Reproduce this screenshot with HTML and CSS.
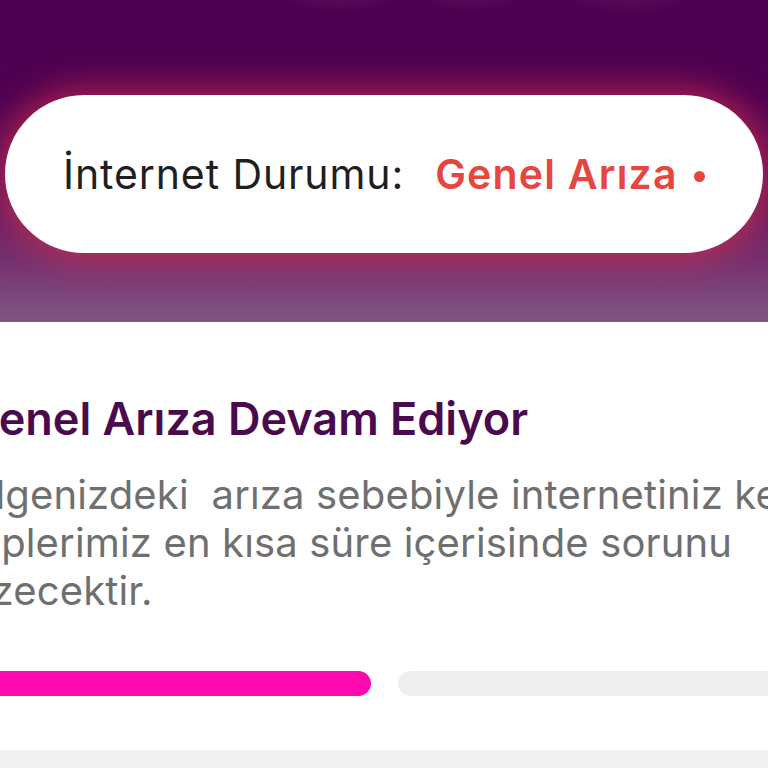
FILE: index.html
```html
<!DOCTYPE html>
<html lang="tr">
<head>
<meta charset="utf-8">
<title>İnternet Durumu</title>
<link rel="stylesheet" href="styles.css">
</head>
<body>
<header class="hero">
  <div class="hero-deco"></div>
  <div class="status-pill">
    <span class="status-label">İnternet Durumu:</span>
    <span class="status-value">Genel Arıza</span>
    <span class="status-dot"></span>
  </div>
</header>
<main class="content">
  <h1 class="title">Genel Arıza Devam Ediyor</h1>
  <p class="desc">
    <span class="line">Bölgenizdeki&nbsp; arıza sebebiyle internetiniz kesilmiştir.</span>
    <span class="line">Ekiplerimiz en kısa süre içerisinde sorunu</span>
    <span class="line">çözecektir.</span>
  </p>
  <div class="progress">
    <div class="seg seg-on"></div>
    <div class="seg"></div>
  </div>
</main>
<footer class="footer"></footer>
</body>
</html>
```
FILE: styles.css
```css
html, body {
  margin: 0;
  padding: 0;
}
body {
  width: 768px;
  height: 768px;
  overflow: hidden;
  background: #ffffff;
  font-family: Inter, "Noto Sans", sans-serif;
  display: flex;
  flex-direction: column;
}
.hero {
  position: relative;
  height: 322px;
  flex: none;
  box-sizing: border-box;
  padding: 95px 5px 0 5px;
  background: linear-gradient(180deg, #4d0050 0%, #4f0152 30%, #5e0e5c 55%, #74306f 80%, #805584 100%);
  overflow: hidden;
}
.hero-deco {
  position: absolute;
  left: 260px;
  top: -24px;
  width: 420px;
  height: 40px;
  background: radial-gradient(ellipse 60px 16px at 80px 20px, rgba(130,70,140,0.22), transparent),
              radial-gradient(ellipse 50px 14px at 210px 22px, rgba(130,70,140,0.18), transparent),
              radial-gradient(ellipse 70px 16px at 370px 22px, rgba(130,70,140,0.18), transparent);
}
.status-pill {
  position: relative;
  height: 158px;
  box-sizing: border-box;
  border-radius: 79px;
  background: #ffffff;
  display: flex;
  align-items: center;
  padding-left: 58px;
  box-shadow: 0 0 34px 6px rgba(210, 45, 75, 0.75);
}
.status-label {
  font-size: 41px;
  color: #1f1f1f;
  font-weight: 400;
  letter-spacing: 0.9px;
}
.status-value {
  margin-left: 31px;
  font-size: 41px;
  font-weight: 600;
  color: #e6463d;
  letter-spacing: 1.2px;
}
.status-dot {
  width: 11px;
  height: 11px;
  border-radius: 50%;
  background: #e6463d;
  margin-left: 16px;
  margin-top: 4px;
}
.content {
  flex: none;
  margin-left: -55px;
  padding-top: 71px;
}
.title {
  margin: 0 0 0 20px;
  font-size: 45px;
  line-height: 52px;
  font-weight: 600;
  color: #4a0a4e;
  white-space: nowrap;
}
.desc {
  margin: 26px 0 0 0;
  font-size: 40px;
  line-height: 48px;
  color: #6f6f6f;
  font-weight: 400;
  letter-spacing: 0.15px;
}
.line {
  display: block;
  white-space: nowrap;
}
.progress {
  margin-top: 56px;
  display: flex;
  gap: 27px;
  width: 879px;
}
.seg {
  flex: 1;
  height: 25px;
  border-radius: 13px;
  background: #eeeeee;
}
.seg-on {
  background: #fe09b0;
}
.footer {
  margin-top: auto;
  height: 18px;
  flex: none;
  background: #f0f0f0;
}
```
